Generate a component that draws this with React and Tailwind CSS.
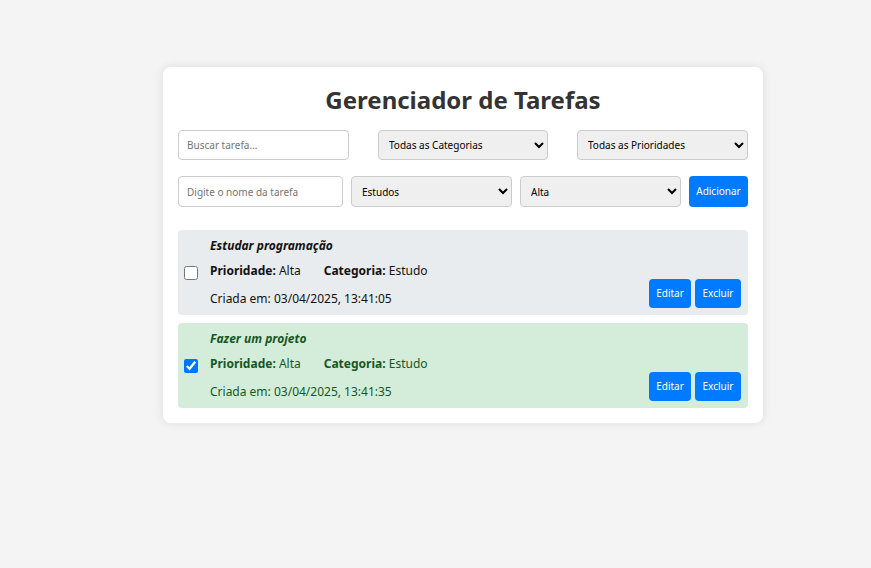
import React, { useState } from 'react';

const tasksInit = [
    { id: 1, name: 'Estudar programação', priority: 'Alta', category: 'Estudo', created: '03/04/2025, 13:41:05', done: false },
    { id: 2, name: 'Fazer um projeto', priority: 'Alta', category: 'Estudo', created: '03/04/2025, 13:41:35', done: true },
];

function TaskItem({ task, onToggle }) {
    return (
        <li className={`flex items-center rounded-[4px] pl-[6px] pr-[7px] pt-[6px] pb-[6px] ${task.done ? 'bg-[#d4edda] text-[#155724]' : 'bg-[#e9ecef] text-[#111]'}`}>
            <input type="checkbox" checked={task.done} onChange={() => onToggle(task.id)} className="w-[14px] h-[14px] m-0 mr-[12px]" />
            <div className="flex-1 text-[12px] leading-[20px]">
                <p className="italic font-bold mb-[5px]">{task.name}</p>
                <p className="mb-[8px]">
                    <span className="font-bold">Prioridade:</span> {task.priority}
                    <span className="font-bold ml-[23px]">Categoria:</span> {task.category}
                </p>
                <p>Criada em: {task.created}</p>
            </div>
            <div className="flex gap-[4px] self-end mb-[1px]">
                <button className="bg-[#007bff] text-white text-[10px] rounded-[4px] h-[29px] w-[42px]">Editar</button>
                <button className="bg-[#007bff] text-white text-[10px] rounded-[4px] h-[29px] w-[46px]">Excluir</button>
            </div>
        </li>
    );
}

export default function App() {
    const [tasks, setTasks] = useState(tasksInit);

    const toggle = (id) => {
        setTasks(tasks.map(t => t.id === id ? { ...t, done: !t.done } : t));
    };

    return (
        <div className="min-h-screen bg-[#f4f4f4] pt-[67px] font-['Noto_Sans',sans-serif]">
            <div className="w-[600px] ml-[163px] bg-white rounded-[8px] shadow-[0_0_10px_rgba(0,0,0,0.1)] p-[15px]">
                <h1 className="text-center text-[24px] font-bold text-[#333] leading-[36px] mb-[12px]">Gerenciador de Tarefas</h1>

                <div className="flex justify-between mb-[16px]">
                    <input type="text" placeholder="Buscar tarefa..." className="w-[171px] h-[30px] border border-[#ccc] rounded-[4px] px-[8px] text-[10px] placeholder:text-[#757575]" />
                    <select className="w-[170px] h-[30px] border border-[#ccc] rounded-[4px] px-[6px] text-[10px] bg-[#efefef]">
                        <option>Todas as Categorias</option>
                    </select>
                    <select className="w-[171px] h-[30px] border border-[#ccc] rounded-[4px] px-[6px] text-[10px] bg-[#efefef]">
                        <option>Todas as Prioridades</option>
                    </select>
                </div>

                <div className="flex gap-[8px] mb-[23px]">
                    <input type="text" placeholder="Digite o nome da tarefa" className="w-[165px] h-[31px] border border-[#ccc] rounded-[4px] px-[8px] text-[10px] placeholder:text-[#757575]" />
                    <select className="w-[161px] h-[31px] border border-[#ccc] rounded-[4px] px-[6px] text-[10px] bg-[#efefef]">
                        <option>Estudos</option>
                    </select>
                    <select className="w-[161px] h-[31px] border border-[#ccc] rounded-[4px] px-[6px] text-[10px] bg-[#efefef]">
                        <option>Alta</option>
                    </select>
                    <button className="w-[59px] h-[31px] bg-[#007bff] text-white text-[10px] rounded-[4px]">Adicionar</button>
                </div>

                <ul className="flex flex-col gap-[8px]">
                    {tasks.map(t => <TaskItem key={t.id} task={t} onToggle={toggle} />)}
                </ul>
            </div>
        </div>
    );
}
